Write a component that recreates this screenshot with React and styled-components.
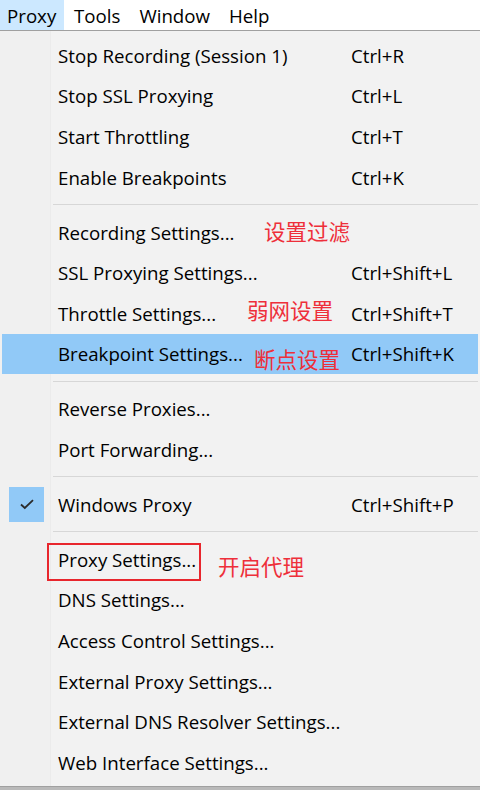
import React from "react";
import styled, { createGlobalStyle } from "styled-components";

const GlobalStyle = createGlobalStyle`
  html, body {
    margin: 0;
    padding: 0;
    background: #b9b9b9;
  }
  body {
    font-family: "Open Sans", "Noto Sans", "Noto Sans CJK SC", sans-serif;
    color: #000;
  }
`;

const MENUS = ["Proxy", "Tools", "Window", "Help"];

// groups of menu rows, separators drawn between groups
const GROUPS = [
  [
    { label: "Stop Recording (Session 1)", keys: "Ctrl+R" },
    { label: "Stop SSL Proxying", keys: "Ctrl+L" },
    { label: "Start Throttling", keys: "Ctrl+T" },
    { label: "Enable Breakpoints", keys: "Ctrl+K" },
  ],
  [
    { label: "Recording Settings...", note: "设置过滤", noteX: 262, noteY: -2 },
    { label: "SSL Proxying Settings...", keys: "Ctrl+Shift+L" },
    { label: "Throttle Settings...", keys: "Ctrl+Shift+T", note: "弱网设置", noteX: 245, noteY: -4 },
    { label: "Breakpoint Settings...", keys: "Ctrl+Shift+K", note: "断点设置", noteX: 252, noteY: 4, active: true },
  ],
  [
    { label: "Reverse Proxies..." },
    { label: "Port Forwarding..." },
  ],
  [{ label: "Windows Proxy", keys: "Ctrl+Shift+P", checked: true }],
  [
    { label: "Proxy Settings...", note: "开启代理", noteX: 216, noteY: 6, boxed: true },
    { label: "DNS Settings..." },
    { label: "Access Control Settings..." },
    { label: "External Proxy Settings..." },
    { label: "External DNS Resolver Settings..." },
    { label: "Web Interface Settings..." },
  ],
];

const App = () => {
  return (
    <>
      <GlobalStyle />
      <Page>
        <MenuBar>
          {MENUS.map((m, i) => (
            <MenuTitle key={m} open={i === 0}>
              {m}
            </MenuTitle>
          ))}
        </MenuBar>
        <Dropdown>
          {GROUPS.map((group, gi) => (
            <React.Fragment key={gi}>
              {gi > 0 && <Separator />}
              {group.map((item) => (
                <Row key={item.label} active={item.active} boxed={item.boxed}>
                  <Gutter>
                    {item.checked && (
                      <CheckBox>
                        <svg width="16" height="12" viewBox="0 0 16 12">
                          <path
                            d="M2 6.5 L5.8 10 L14 2.2"
                            fill="none"
                            stroke="#2b2b2b"
                            strokeWidth="1.8"
                          />
                        </svg>
                      </CheckBox>
                    )}
                  </Gutter>
                  <Label>{item.label}</Label>
                  <Keys>{item.keys}</Keys>
                  {item.note && (
                    <Note style={{ left: item.noteX, marginTop: item.noteY }}>{item.note}</Note>
                  )}
                </Row>
              ))}
            </React.Fragment>
          ))}
        </Dropdown>
      </Page>
    </>
  );
};

export default App;

const Page = styled.div`
  width: 480px;
  height: 790px;
  overflow: hidden;
  background: #b9b9b9;
`;

const MenuBar = styled.div`
  display: flex;
  height: 30px;
  background: #fff;
  border-bottom: 1px solid #a0a0a0;
`;

const MenuTitle = styled.div`
  display: flex;
  align-items: center;
  padding: 0 9px 0 10px;
  font-size: 18.7px;
  background: ${(p) => (p.open ? "#cce8ff" : "transparent")};
  &:first-child {
    width: 64px;
    box-sizing: border-box;
    padding-left: 7px;
  }
`;

const Dropdown = styled.div`
  position: relative;
  display: flex;
  flex-direction: column;
  padding: 4px 2px 3px 2px;
  background: linear-gradient(to right, #f0f0f0 0 50px, #ebebeb 50px 51px, #f2f2f2 51px);
  border-bottom: 1px solid #a0a0a0;
`;

const Row = styled.div`
  position: relative;
  display: flex;
  align-items: center;
  height: 40.6px;
  background: ${(p) => (p.active ? "#91c9f7" : "transparent")};
  &::after {
    content: "";
    display: ${(p) => (p.boxed ? "block" : "none")};
    position: absolute;
    left: 45px;
    top: 4px;
    width: 150px;
    height: 34px;
    border: 2px solid #e8262d;
  }
`;

const Gutter = styled.div`
  width: 50px;
  flex: none;
  display: flex;
  align-items: center;
  justify-content: center;
  height: 100%;
`;

const CheckBox = styled.div`
  width: 35px;
  height: 35px;
  margin-left: -1px;
  background: #91c9f7;
  display: flex;
  align-items: center;
  justify-content: center;
`;

const Label = styled.div`
  flex: 1;
  font-size: 18.7px;
  padding-left: 6px;
  white-space: nowrap;
`;

const Keys = styled.div`
  width: 127px;
  flex: none;
  font-size: 18.7px;
  white-space: nowrap;
`;

const Note = styled.span`
  position: absolute;
  top: 50%;
  transform: translateY(-50%);
  font-family: "Noto Sans CJK SC", sans-serif;
  font-size: 21.5px;
  color: #ee2f3a;
  white-space: nowrap;
`;

const Separator = styled.div`
  height: 1px;
  margin: 6.7px 0 6.7px 51px;
  background: #d7d7d7;
`;
